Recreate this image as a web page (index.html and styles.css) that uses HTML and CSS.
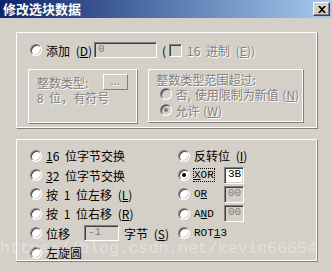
FILE: index.html
```html
<!DOCTYPE html>
<html>
<head>
    <title>修改选块数据</title>
    <link rel="stylesheet" href="styles.css">
</head>
<body>
    <div class="window">
        <div class="titlebar">
            <span class="title">修改选块数据</span>
            <span class="close-btn">
                <svg width="8" height="7" viewBox="0 0 8 7"><path d="M0 0h2l2 2 2-2h2L5 3.5 8 7H6L4 5 2 7H0l3-3.5z" fill="#000"/></svg>
            </span>
        </div>

        <div class="content">
            <div class="group top-group">
                <div class="add-row">
                    <span class="radio"></span>
                    <span class="add-label">添加 (<u>D</u>)</span>
                    <span class="field disabled wide">0</span>
                    <span class="paren">(</span>
                    <span class="checkbox"></span>
                    <span class="muted">16 进制 (<u>E</u>))</span>
                </div>

                <div class="sub-row">
                    <div class="group sub-left">
                        <div class="type-row">
                            <span class="muted">整数类型:</span>
                            <span class="dots-btn">...</span>
                        </div>
                        <div class="muted line">8 位，有符号</div>
                    </div>
                    <div class="group sub-right">
                        <div class="muted sub-title">整数类型范围超过:</div>
                        <div class="opt first">
                            <span class="radio off"></span>
                            <span class="muted">否, 使用限制为新值 (<u>N</u>)</span>
                        </div>
                        <div class="opt">
                            <span class="radio off checked"></span>
                            <span class="muted">允许 (<u>W</u>)</span>
                        </div>
                    </div>
                </div>
            </div>

            <div class="group ops">
                <div class="op"><span class="radio"></span><span><u>1</u>6 位字节交换</span></div>
                <div class="op"><span class="radio"></span><span>反转位 (<u>I</u>)</span></div>

                <div class="op"><span class="radio"></span><span><u>3</u>2 位字节交换</span></div>
                <div class="op"><span class="radio checked"></span><span class="code focus"><u>X</u>OR</span><span class="field small">3B</span></div>

                <div class="op"><span class="radio"></span><span>按 1 位左移 (<u>L</u>)</span></div>
                <div class="op"><span class="radio"></span><span class="code">O<u>R</u></span><span class="field small disabled">00</span></div>

                <div class="op"><span class="radio"></span><span>按 1 位右移 (<u>R</u>)</span></div>
                <div class="op"><span class="radio"></span><span class="code">A<u>N</u>D</span><span class="field small disabled">00</span></div>

                <div class="op"><span class="radio"></span><span class="shift-label">位移</span><span class="field disabled shift">-1</span><span class="bytes">字节 (<u>S</u>)</span></div>
                <div class="op"><span class="radio"></span><span class="code">ROT<u>1</u>3</span></div>

                <div class="op"><span class="radio"></span><span>左旋圆</span></div>
            </div>
        </div>

        <div class="watermark">https://blog.csdn.net/kevin66654</div>
    </div>
</body>
</html>
```

FILE: styles.css
```css
body {
    margin: 0;
    background: #d4d0c8;
}
.window {
    position: relative;
    width: 332px;
    height: 271px;
    background: #d4d0c8;
    font-family: "Noto Sans CJK SC", sans-serif;
    font-size: 12px;
    word-spacing: 3px;
    color: #000;
    overflow: hidden;
}
u {
    text-decoration: underline;
    text-underline-offset: 1px;
}

/* title bar */
.titlebar {
    height: 18px;
    display: flex;
    align-items: center;
    justify-content: space-between;
    padding: 0 2px 0 3px;
    background: linear-gradient(to right, #0a246a, #a6caf0);
}
.title {
    color: #fff;
    font-weight: bold;
    font-size: 13px;
    line-height: 18px;
    word-spacing: 0;
}
.close-btn {
    box-sizing: border-box;
    width: 17px;
    height: 14px;
    display: flex;
    align-items: center;
    justify-content: center;
    background: #d4d0c8;
    border: 1px solid;
    border-color: #fff #404040 #404040 #fff;
    box-shadow: inset -1px -1px #808080;
}

.content {
    padding: 14px 14px 0 16px;
}

/* group frames */
.group {
    box-sizing: border-box;
    border: 1px solid;
    border-color: #fff #808080 #808080 #fff;
    box-shadow: inset -1px -1px #fff;
}
.top-group {
    width: 302px;
    height: 97px;
    padding: 9px 13px 0 11px;
}
.ops {
    width: 302px;
    height: 123px;
    margin-top: 10px;
    padding: 6px 0 0 13px;
    display: grid;
    grid-template-columns: 148px 1fr;
    grid-auto-rows: 19.4px;
}

/* controls */
.radio {
    position: relative;
    box-sizing: border-box;
    flex: none;
    width: 12px;
    height: 12px;
    border-radius: 50%;
    background: #fff;
    border: 1px solid;
    border-color: #808080 #fff #fff #808080;
    box-shadow: inset 1px 1px #404040, inset -1px -1px #d4d0c8;
}
.radio.off {
    background: #d4d0c8;
}
.radio.checked::after {
    content: "";
    position: absolute;
    left: 3px;
    top: 3px;
    width: 4px;
    height: 4px;
    border-radius: 50%;
    background: #000;
}
.radio.off.checked::after {
    background: #808080;
}
.checkbox {
    box-sizing: border-box;
    width: 13px;
    height: 13px;
    background: #d4d0c8;
    border: 1px solid;
    border-color: #808080 #fff #fff #808080;
    box-shadow: inset 1px 1px #404040, inset -1px -1px #d4d0c8;
    margin-right: 5px;
}
.field {
    box-sizing: border-box;
    height: 17px;
    line-height: 13px;
    padding-left: 3px;
    background: #fff;
    border: 1px solid;
    border-color: #808080 #fff #fff #808080;
    box-shadow: inset 1px 1px #404040, inset -1px -1px #d4d0c8;
    font-family: "Liberation Mono", monospace;
    font-size: 11px;
}
.field.disabled {
    background: #d4d0c8;
    color: #808080;
}
.muted {
    color: #808080;
    text-shadow: 1px 1px #fff;
}

/* add row */
.add-row {
    display: flex;
    align-items: center;
    height: 16px;
    padding-left: 2px;
}
.add-row .radio {
    margin-right: 4px;
}
.add-label {
    width: 48px;
}
.field.wide {
    width: 63px;
    height: 16px;
}
.paren {
    margin: 0 3px 0 5px;
}

.sub-row {
    display: flex;
    gap: 10px;
    margin-top: 11px;
}
.sub-left {
    width: 110px;
    height: 55px;
    padding: 4px 9px 0 8px;
}
.type-row {
    display: flex;
    align-items: center;
    justify-content: space-between;
    height: 16px;
}
.dots-btn {
    box-sizing: border-box;
    width: 25px;
    height: 16px;
    border: 1px solid;
    border-color: #fff #808080 #808080 #fff;
    color: #808080;
    text-shadow: 1px 1px #fff;
    text-align: center;
    line-height: 10px;
    font-size: 11px;
}
.line {
    line-height: 16px;
}
.sub-right {
    width: 157px;
    height: 54px;
    padding: 3px 0 0 11px;
}
.sub-title {
    line-height: 14px;
    margin-left: -3px;
}
.opt {
    display: flex;
    align-items: center;
    gap: 4px;
    height: 14px;
    white-space: nowrap;
    word-spacing: 1px;
}
.opt + .opt {
    height: 16px;
    margin-top: 1px;
}

/* operation list */
.op {
    display: flex;
    align-items: center;
    gap: 4px;
    white-space: nowrap;
}
.code {
    font-family: "Liberation Mono", monospace;
    font-size: 11px;
    min-width: 26px;
}
.code.focus {
    min-width: 0;
    width: 20px;
    margin-right: 6px;
    outline: 1px dotted #000;
    outline-offset: 0;
}
.field.small {
    width: 20px;
}
.shift-label {
    width: 34px;
}
.field.shift {
    width: 35px;
    height: 16px;
}
.bytes {
    margin-left: 1px;
}

.watermark {
    position: absolute;
    left: 0;
    top: 240px;
    font-family: "Liberation Mono", monospace;
    font-size: 16.5px;
    line-height: 18px;
    color: rgba(255, 255, 255, 0.35);
    white-space: nowrap;
    pointer-events: none;
}
```
